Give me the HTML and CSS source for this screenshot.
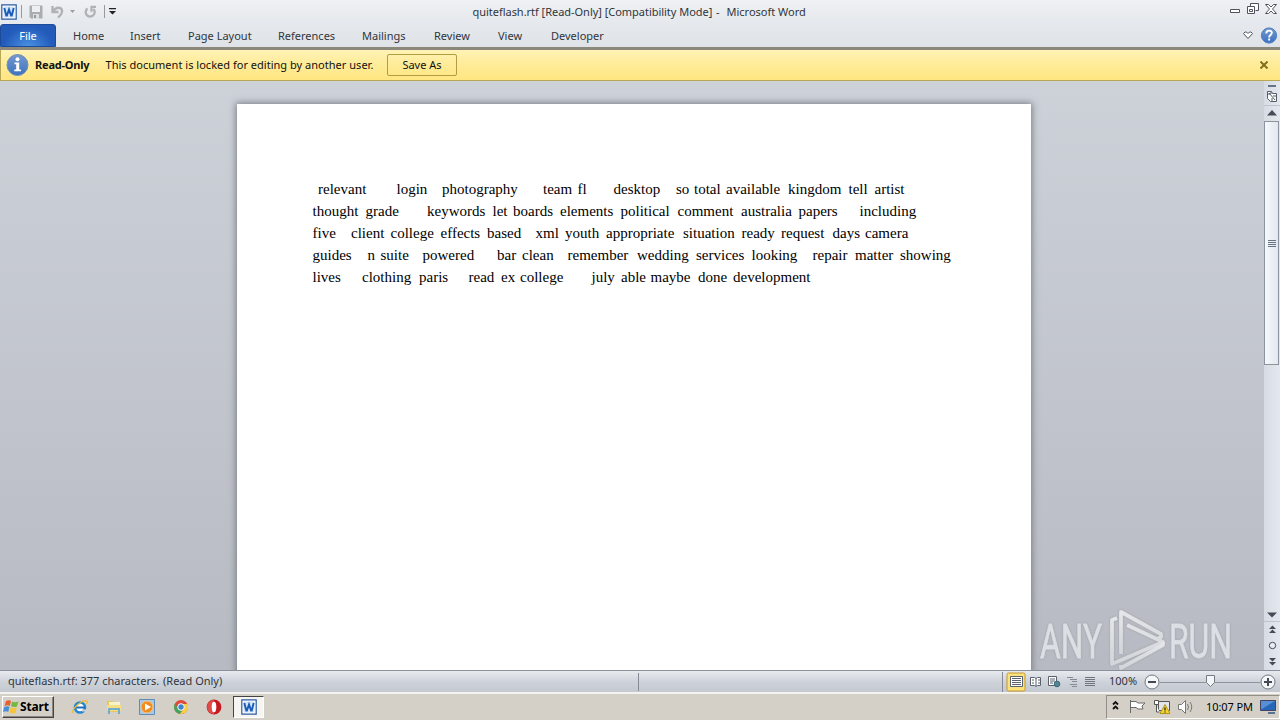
FILE: index.html
```html
<!DOCTYPE html>
<html lang="en">
<head>
<meta charset="utf-8">
<title>quiteflash.rtf - Microsoft Word</title>
<link rel="stylesheet" href="styles.css">
</head>
<body>
<svg width="0" height="0" class="defs">
  <defs>
    <linearGradient id="blue" x1="0" y1="0" x2="0" y2="1"><stop offset="0" stop-color="#7599cd"/><stop offset="1" stop-color="#3c72c2"/></linearGradient>
    <linearGradient id="wm" x1="0" y1="0" x2="0" y2="1"><stop offset="0" stop-color="#e4e6e9"/><stop offset="1" stop-color="#d2d5d9"/></linearGradient>
    <symbol id="word" viewBox="0 0 16 16">
      <path d="M.8.800h14.400v14.400H.8z" fill="#fff" stroke="#2a5ba4" stroke-width="1.200"/>
      <path d="M2.500 2.500h11v11h-11z" fill="#d3e4f7"/>
      <path d="M3.300 4l2 7.500h.6L8 5.500l2.100 6h.6L12.700 4" fill="none" stroke="#1a5cb8" stroke-width="1.900"/>
    </symbol>
  </defs>
</svg>
<div class="window">
  <header class="titlebar">
    <div class="quick">
      <svg class="i-word" width="16" height="16"><use href="#word"/></svg>
      <i class="bar"></i>
      <svg class="i-save" width="14" height="14" viewBox="0 0 14 14"><path d="M.5.5h13v13H2l-1.500-1.500z" fill="#a9acb0"/><path d="M3 1h8v6H3z" fill="#eceef1"/><path d="M4 9h6v5H4z" fill="#dcdfe2"/><path d="M5 10h2v3H5z" fill="#999"/></svg>
      <svg class="i-undo" width="14" height="14" viewBox="0 0 14 14"><path d="M1.500 1v6h6M2.500 6C5 1.500 10.500 2 11 5.500S9.500 10.500 7 12.500" fill="none" stroke="#afb2b6" stroke-width="2.400"/></svg>
      <svg class="i-drop" width="5" height="3" viewBox="0 0 5 3"><path d="M0 0h5L2.500 3z" fill="#9b9ea2"/></svg>
      <svg class="i-redo" width="13" height="14" viewBox="0 0 13 14"><path d="M3.500 3.500a4.500 4.500 0 1 0 6 .5M12 1.800H7.500v5" fill="none" stroke="#afb2b6" stroke-width="2.300"/></svg>
      <i class="bar bar2"></i>
      <svg class="i-more" width="7" height="7" viewBox="0 0 7 7"><path d="M0 0h7v1.200H0zM0 3h7L3.500 6.500z" fill="#222"/></svg>
    </div>
    <div class="title"><span class="t1">quiteflash.rtf [Read-Only] [Compatibility Mode]</span><span class="t2">-</span><span>Microsoft Word</span></div>
    <svg class="winctl" width="50" height="14" viewBox="0 0 50 14" fill="none" stroke="#4e545d"><path d="M1.500 8.500h9v3h-9z" fill="#fff"/><path d="M21.500 5V2.500h8v7h-3M18.500 5.500h7v7h-7zM20.500 8.500h3v2h-3z" fill="#fff"/><path d="M36.500 3.500h3l2.500 2.500 2.500-2.500h3L43.500 8l4 4.500h-3L42 10l-2.500 2.500h-3L40.500 8z" fill="#fff"/></svg>
  </header>
  <nav class="tabs">
    <span class="file">File</span>
    <span class="home">Home</span><span class="insert">Insert</span><span class="layout">Page Layout</span><span class="refs">References</span><span class="mail">Mailings</span><span class="review">Review</span><span class="view">View</span><span class="dev">Developer</span>
    <svg class="help" width="36" height="18" viewBox="0 0 36 18"><path d="M2.500 7.500L4 6h1.500L7 7.500 8.500 6H10l1.500 1.500L7 12.500z" fill="#fff" stroke="#4e545d"/><circle cx="28" cy="9.500" r="7.600" fill="url(#blue)" stroke="#4d7cbf"/><path d="M25.300 7.500c0-3.800 5.800-3.600 5.500-.5-.2 2-2.700 2-2.700 4.500M28.100 12.500v2" fill="none" stroke="#fff" stroke-width="1.900"/></svg>
  </nav>
  <div class="notice">
    <svg class="i-info" width="23" height="23" viewBox="0 0 23 23"><circle cx="11.500" cy="11" r="10.500" fill="url(#blue)" stroke="#6e8fb8"/><circle cx="11.500" cy="5.200" r="2" fill="#fff"/><path d="M8.500 8.500h4.700v7H15v1.800H8.300v-1.800h1.900v-5.200H8.500z" fill="#fff"/></svg>
    <b>Read-Only</b>
    <span class="msg">This document is locked for editing by another user.</span>
    <span class="save">Save As</span>
    <svg class="i-close" width="8" height="8" viewBox="0 0 8 8"><path d="M.5.5l7 7m0-7l-7 7" stroke="#80701f" stroke-width="2"/></svg>
  </div>
  <main class="workspace">
    <article class="page" id="page"></article>
    <svg class="watermark" width="204" height="68" viewBox="0 -6 204 68">
      <g class="wmtext"><text x="4" y="50" textLength="62" lengthAdjust="spacingAndGlyphs">ANY</text><text x="133" y="50" textLength="63" lengthAdjust="spacingAndGlyphs">RUN</text></g>
      <g fill="none" stroke="url(#wm)" stroke-width="3.800" stroke-linejoin="round"><path d="M81 10l-5 2v44l51-22-36-17"/><path d="M85 46V4l40 22v3l-4 2"/><path d="M85 57v3l42-23v-3"/></g>
    </svg>
    <aside class="scroll">
      <svg class="s-top" width="16" height="40" viewBox="0 0 16 40"><path d="M4 4h8v2H4z" fill="#687385"/><path d="M3.500 10.500h4l1 2h4v8h-6l-3-3z" fill="#fff" stroke="#555d69"/><path d="M3 13h4v-2M5 12l6 7m1-4H9m-1 5v-3" fill="none" stroke="#555d69"/><path d="M3 34.500h10L8 29z" fill="#454c57"/><path d="M0 24.500h16" stroke="#bfc5cf"/></svg>
      <div class="thumb"><i></i><i></i><i></i><i></i></div>
      <svg class="s-bot" width="16" height="62" viewBox="0 0 16 62" fill="#454c57"><path d="M3 4.500h10l-5 5z"/><path d="M0 13.500h16" stroke="#bfc5cf"/><path d="M5 21l3.500-3.500L12 21zM5 25l3.500-3.500L12 25z"/><circle cx="8.500" cy="37.500" r="3.200" fill="#e9ecf1" stroke="#454c57"/><path d="M5 50l3.500 3.500L12 50zM5 54l3.500 3.500L12 54z"/></svg>
    </aside>
  </main>
  <footer class="status">
    <span class="count">quiteflash.rtf: 377 characters.</span><span class="ro">(Read Only)</span>
    <i class="div"></i>
    <svg class="views" width="94" height="20" viewBox="0 0 94 20" fill="none" stroke="#59616c"><path d="M.5 0v20" stroke="#858b94"/><rect x="5" y="1" width="18" height="18" rx="1.500" fill="#fbe27c" stroke="#c7962c"/><path d="M8.500 4.500h12v10h-12z" fill="#fff"/><path d="M10 6.500h9m-9 2h9m-9 2h9m-9 2h9"/><path d="M28.500 5.500h4l1.500 1 1.500-1h3v8h-3l-1.500 1-1.500-1h-4zM34 6v8" fill="#fff"/><path d="M30 8h2m-2 3h2m4-3h2m-2 3h2"/><path d="M46.500 4.500h8v9h-8z" fill="#fff"/><path d="M48 7h5m-5 2h5m-5 2h3"/><circle cx="55" cy="12" r="2.800" fill="#538596" stroke="#396777"/><path d="M65 5.500h6m-3 2h7m-5 2h5m-7 3h7m-5 2h5" stroke="#858b94"/><path d="M83 5.500h10m-10 2h10m-10 2h10m-10 2h10m-10 2h10" stroke="#6d747e"/></svg>
    <span class="pct">100%</span>
    <svg class="zoom" width="134" height="20" viewBox="0 0 134 20" fill="#f5f6f8" stroke="#737a84"><path d="M17 10.500h100" stroke="#8c939e"/><circle cx="9" cy="10" r="7"/><path d="M5 10h8" stroke="#434953" stroke-width="2"/><path d="M63.500 3.500h8v7l-4 4-4-4z"/><circle cx="125" cy="10" r="7"/><path d="M121 10h8m-4-4v8" stroke="#434953" stroke-width="2"/></svg>
  </footer>
</div>
<div class="taskbar">
  <div class="start"><svg width="17" height="16" viewBox="0 0 17 16"><path d="M3 2q3-1.500 5 0L6.800 7Q4 5.500 1.500 7z" fill="#e85f31"/><path d="M9 2.500q3 1.500 6.500-.2L14 7.500q-3 1.200-6-.2z" fill="#76b844"/><path d="M1.300 8q3-1.500 5.200 0L5.200 13Q3 11.500 0 13z" fill="#488ed6"/><path d="M7.600 8.300q3 1.500 6.200.2L12.500 14q-3.500 1.200-6-.6z" fill="#f5c43c"/></svg><b>Start</b></div>
  <div class="apps">
    <svg width="16" height="16" viewBox="0 0 16 16"><circle cx="8" cy="8.500" r="5" fill="#fff" stroke="#2388d6" stroke-width="2.700"/><path d="M4 8.500h9" stroke="#1b6fbe" stroke-width="2"/><path d="M10 10.500h5v2h-5z" fill="#d6d2c9"/><path d="M1 14C-1 10 11 0 15 2c1 .7 0 2-.5 3" fill="none" stroke="#f1b92f" stroke-width="1.300"/></svg>
    <svg width="16" height="16" viewBox="0 0 16 16"><path d="M1 2h6l1 2h6v9H1z" fill="#e7c75a"/><path d="M3 3h11v5H3z" fill="#f6f2c9"/><path d="M1 6h14v6H1z" fill="#f5df83"/><path d="M3 15v-5h10v5" fill="none" stroke="#72add0" stroke-width="2"/></svg>
    <svg width="16" height="16" viewBox="0 0 16 16"><path d="M.5.5h15v15H.5z" fill="#a9c9e4" stroke="#5b8db8"/><circle cx="8" cy="8" r="6" fill="#f18c21" stroke="#fac17d"/><path d="M6 4.500v7L12 8z" fill="#fff"/></svg>
    <svg width="16" height="16" viewBox="0 0 16 16"><circle cx="8" cy="8" r="7" fill="#dc4b3b"/><path d="M2 4.500A7 7 0 0 0 7 15l3-5H5z" fill="#43a45b"/><path d="M14.400 5A7 7 0 0 1 7 15l4-6-2-4z" fill="#f6cf45"/><circle cx="8" cy="8" r="3.300" fill="#4283d0" stroke="#fff"/></svg>
    <svg width="16" height="16" viewBox="0 0 16 16"><circle cx="8" cy="8" r="7.400" fill="#c51a20"/><path d="M8 1a7 7 0 0 0 0 14z" fill="#df4b48"/><ellipse cx="8" cy="8" rx="2.300" ry="5.300" fill="#fff"/></svg>
  </div>
  <div class="active"><svg width="16" height="16"><use href="#word"/></svg></div>
  <div class="tray">
    <svg class="traysvg" width="84" height="20" viewBox="0 0 84 20" fill="none"><path d="M2 7.500l2.500-2.500L7 7.500M2 12l2.500-2.500L7 12" stroke="#111" stroke-width="1.800"/><path d="M19.500 3v13M20 4.500h5l2 1.500h7l-3 3 1 3h-5l-2-1.500h-5" fill="#fff" stroke="#6a6a68"/><path d="M47.500 4.500h11v9h-11z" fill="#e2e6ea" stroke="#555"/><path d="M43.500 3.500h4v4h-4zM45.500 8v7h3" fill="#fff" stroke="#555"/><path d="M54 7.500l5 9H49z" fill="#f7d52e" stroke="#b3951a"/><path d="M54 10.500v3m0 1v1" stroke="#222" stroke-width="1.300"/><path d="M67.500 7.500h3l4-4v13l-4-4h-3z" fill="#fff" stroke="#777"/><path d="M76.500 7q2 3 0 6M79 5q3.500 5 0 10" stroke="#777"/></svg>
    <span>10:07 PM</span>
    <svg width="16" height="14" viewBox="0 0 16 14"><path d="M.5.500h15v10H.5z" fill="#2866b8" stroke="#446"/><path d="M1 1h14L2 9H1z" fill="#5590d7"/><path d="M8 12h7v2H8z" fill="#58748f"/></svg>
  </div>
</div>
<script src="page.js"></script>
</body>
</html>
```
FILE: page.js
```js
// Each word run: text with its trailing spaces, and its start within the page.
const lines = [
  [["relevant        ", 318], ["login    ", 396.5], ["photography      ", 442], ["team ", 543], ["fl       ", 577.5], ["desktop    ", 613.5], ["so ", 676], ["total ", 694], ["available  ", 726], ["kingdom  ", 788], ["tell  ", 848.5], ["artist", 874.5]],
  [["thought  ", 312.5], ["grade       ", 365.5], ["keywords ", 427], ["let ", 492.5], ["boards ", 513], ["elements  ", 560], ["political  ", 620.5], ["comment  ", 677.5], ["australia  ", 741], ["papers     ", 798.5], ["including", 859.5]],
  [["five    ", 312.5], ["client  ", 351], ["college  ", 390.5], ["effects  ", 440.5], ["based   ", 487], ["xml  ", 535.5], ["youth  ", 565], ["appropriate  ", 606], ["situation  ", 683], ["ready ", 741.5], ["request  ", 781], ["days ", 832.5], ["camera", 865]],
  [["guides    ", 312.5], ["n ", 367.5], ["suite    ", 380.5], ["powered     ", 422.5], ["bar ", 497], ["clean    ", 522], ["remember  ", 567.5], ["wedding  ", 637], ["services  ", 696], ["looking    ", 751.5], ["repair  ", 812.5], ["matter  ", 855], ["showing", 900]],
  [["lives      ", 312.5], ["clothing  ", 362], ["paris     ", 419], ["read ", 468.5], ["ex ", 501], ["college       ", 520], ["july  ", 591.5], ["able ", 621], ["maybe  ", 650.5], ["done  ", 698], ["development", 733]]
];
const left = 312;
for (const line of lines) {
  const p = document.createElement("p");
  p.style.paddingLeft = line[0][1] - left + "px";
  line.forEach(([text, x], i) => {
    const s = document.createElement("span");
    s.textContent = text;
    if (i + 1 < line.length) s.style.width = line[i + 1][1] - x + "px";
    p.append(s);
  });
  document.getElementById("page").append(p);
}
```
FILE: styles.css
```css
* { box-sizing: border-box; }
body { margin: 0; width: 1280px; height: 720px; overflow: hidden; display: flex; flex-direction: column; font: 11px/16px "Noto Sans", sans-serif; color: #30353c; }
svg { display: block; flex: none; }
.defs { position: absolute; }
span, b { white-space: nowrap; }
.window { height: 692px; display: flex; flex-direction: column; }
.titlebar { height: 24px; display: flex; align-items: flex-start; justify-content: space-between; background: linear-gradient(#eff1f4, #e5e8ec); }
.quick { display: flex; align-items: center; height: 23px; width: 472px; padding-left: 1px; }
.bar { width: 1px; height: 13px; background: #969a9f; margin: 0 7px 0 4px; }
.i-undo { margin-left: 8px; }
.i-drop { margin-left: 5px; }
.i-redo { margin-left: 9px; }
.bar2 { margin: 0 4px 0 7px; }
.title { display: flex; width: 340px; padding-top: 4px; padding-left: .5px; }
.t1 { width: 243.500px; letter-spacing: -.03px; }
.t2 { width: 10.500px; }
.winctl { margin: 1px 1px 0 auto; }
.tabs { height: 26px; background: linear-gradient(#e5e8ec, #dfe3e7); border-bottom: 3px solid #8b877a; display: flex; line-height: 24px; }
.tabs span { flex: none; }
.tabs .file { width: 56px; height: 23px; border: 1px solid #1d4b9b; border-radius: 3px 3px 0 0; background: radial-gradient(ellipse at 50% 110%, #4b94e5, #235bbb 65%, #2459b5); color: #fff; text-align: center; line-height: 22px; }
.home { margin-left: 17px; width: 57px; }
.insert { width: 58px; }
.layout { width: 90px; }
.refs { width: 84px; }
.mail { width: 72px; }
.review { width: 64px; }
.view { width: 53px; }
.help { margin: 2px 3px 0 auto; }
.notice { height: 31px; display: flex; align-items: center; background: linear-gradient(#fff3b5, #ffec9a 45%, #ffe681); border-bottom: 1px solid #b9a758; border-left: 1px solid #b9a758; color: #111; padding-left: 5px; }
.notice b { margin-left: 6px; width: 70.500px; letter-spacing: -.2px; }
.msg { width: 281.500px; letter-spacing: .02px; }
.save { width: 70px; height: 22px; border: 1px solid #b29b43; border-radius: 2px; text-align: center; line-height: 20px; }
.i-close { margin: 0 12px 0 auto; }
.workspace { height: 589px; overflow: hidden; position: relative; display: flex; justify-content: space-between; background: linear-gradient(#cdd1d8, #b7bac2); padding-left: 237px; }
.page { width: 794px; height: 580px; margin-top: 23px; padding: 74px 0 0 75px; background: #fff; box-shadow: 0 0 7px 1px #777b82; color: #000; font: 15px/22px "Liberation Serif", serif; }
.page p { margin: 0; display: flex; }
.page span { flex: none; white-space: pre; }
.watermark { position: absolute; left: 1036px; top: 521px; overflow: visible; filter: drop-shadow(0 0 1px #9da0a6); }
.wmtext { font: 49px/1 Roboto, sans-serif; fill: #dcdfe3; stroke: #dcdfe3; stroke-width: .8px; }
.scroll { width: 16px; background: linear-gradient(90deg, #d7dce4, #e4e8ee); display: flex; flex-direction: column; }
.thumb { width: 15px; height: 244px; border: 1px solid #8e949f; background: linear-gradient(90deg, #f7f9fc, #e2e7ef); display: flex; flex-direction: column; align-items: center; justify-content: center; gap: 1px; }
.thumb i { width: 8px; height: 1px; background: #697383; }
.s-bot { margin-top: auto; }
.status { height: 22px; display: flex; align-items: center; background: linear-gradient(#e7eaee, #cdd1d8 55%, #c4c8d0); border-top: 1px solid #8b9099; padding-left: 8px; }
.status span { margin-top: -2px; }
.count { width: 155px; }
.ro { width: 475px; }
.div { width: 1px; height: 18px; background: #858b94; }
.views { margin-left: 363px; }
.pct { margin-left: 13px; width: 31px; }
.zoom { margin-left: 3px; }
.taskbar { height: 28px; background: #d5d0c7; border-top: 2px solid #f5f3ef; display: flex; align-items: center; padding-left: 2px; }
.start { width: 52px; height: 22px; border: 1px solid; border-color: #fff #444 #444 #fff; box-shadow: inset -1px -1px #8b8780; display: flex; align-items: center; padding-left: 0; color: #000; font-size: 12px; letter-spacing: -.15px; }
.apps { display: flex; gap: 17.500px; margin-left: 18px; }
.active { margin-left: 11px; width: 31px; height: 22px; background: #f6f5f2; border: 1px solid; border-color: #444 #fff #fff #444; display: flex; align-items: center; justify-content: center; }
.tray { margin-left: auto; width: 174px; height: 24px; border: 1px solid; border-color: #928e87 #fff #fff #928e87; display: flex; align-items: center; padding-left: 4px; color: #000; }
.tray span { margin: 0 0 0 11px; width: 54px; letter-spacing: -.1px; }
```
